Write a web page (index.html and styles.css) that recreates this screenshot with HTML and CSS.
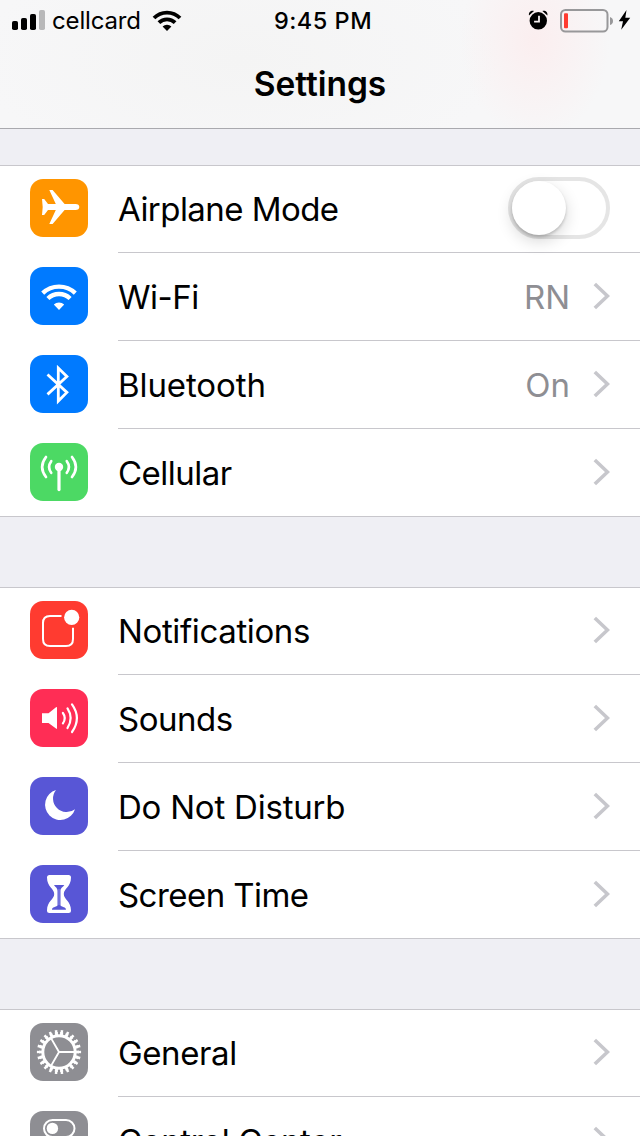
FILE: index.html
```html
<!DOCTYPE html>
<html lang="en">
<head>
<meta charset="utf-8">
<title>Settings</title>
<link rel="stylesheet" href="styles.css">
</head>
<body>
<div class="screen">
  <header class="header">
    <div class="status">
      <div class="status-left">
        <svg class="signal" width="34" height="20" viewBox="0 0 34 20"><rect x="0" y="11" width="6" height="9" rx="1.8"/><rect x="9" y="8" width="6" height="12" rx="1.8"/><rect x="18" y="4" width="6" height="16" rx="1.8"/><rect x="27" y="0" width="6" height="20" rx="1.8" fill="#b8b8b9"/></svg>
        <span class="carrier">cellcard</span>
        <svg class="status-wifi" width="30" height="22" viewBox="0 0 30 22"><g fill="none" stroke="#000" stroke-width="3.8"><path d="M2 8A18.2 18.2 0 0 1 28 8"/><path d="M6.9 12.7A11.4 11.4 0 0 1 23.1 12.7"/></g><path d="M15 21L10.6 16.6A6.3 6.3 0 0 1 19.4 16.6Z"/></svg>
      </div>
      <span class="time">9:45 PM</span>
      <div class="status-right">
        <svg width="20" height="22" viewBox="0 0 20 22"><circle cx="10.3" cy="11.8" r="8.7"/><path d="M1 6.5C.4 3.4 3 1.1 6 2ZM19.4 6.5C20 3.4 17.4 1.1 14.4 2Z"/><path d="M11 6.7V12.6H6.1" fill="none" stroke="#f8f1f2" stroke-width="1.8"/></svg>
        <svg class="battery" width="54" height="24" viewBox="0 0 54 24"><rect x="1" y="1" width="46.5" height="21.5" rx="4.5" fill="none" stroke="#98989a" stroke-width="2"/><rect x="4" y="4.3" width="4" height="15" rx="1" fill="#ff3b30"/><path d="M50 8Q53 9 53 12T50 16Z" fill="#98989a"/></svg>
        <svg class="bolt" width="13" height="22" viewBox="0 0 13 22"><path d="M8.5 1L.8 12.3H5L3.2 20.7L12.2 8.7H7.3Z"/></svg>
      </div>
    </div>
    <h1 class="title">Settings</h1>
  </header>

  <main class="groups">
    <section class="group">
      <div class="row">
        <svg class="tile orange" viewBox="0 0 58 58"><path d="M12 20H14.2L18 25L25.8 25L19.3 11H22.6L34.6 25H45.5Q49.3 25.2 49.3 28T45.5 31H34.6L22.6 45H19.3L25.8 31H18L14.2 36H12L12.7 28Z"/></svg>
        <div class="cell"><span class="label l-airplane">Airplane Mode</span><span class="switch"><span class="knob"></span></span></div>
      </div>
      <div class="row">
        <svg class="tile blue" viewBox="0 0 58 58"><g class="line" stroke-width="4.3"><path d="M12.7 26.1A23.5 23.5 0 0 1 45.3 26.1"/><path d="M17.9 31.5A16 16 0 0 1 40.1 31.5"/></g><path d="M29 43L23.8 37.5A7.7 7.7 0 0 1 34.2 37.5Z"/></svg>
        <div class="cell"><span class="label l-wifi">Wi-Fi</span><span class="value">RN</span><svg class="chevron" viewBox="0 0 17 28"><path d="M1.8 2L14.5 14L1.8 26"/></svg></div>
      </div>
      <div class="row">
        <svg class="tile blue" viewBox="0 0 58 58"><path class="line" stroke-width="2.8" d="M17.5 19.5L36.9 37.4L28.3 46V13L36.9 21.5L17.5 39.4"/></svg>
        <div class="cell"><span class="label l-bluetooth">Bluetooth</span><span class="value">On</span><svg class="chevron" viewBox="0 0 17 28"><path d="M1.8 2L14.5 14L1.8 26"/></svg></div>
      </div>
      <div class="row">
        <svg class="tile green" viewBox="0 0 58 58"><circle cx="29" cy="24" r="4.2"/><g class="line" stroke-linecap="round"><path stroke-width="3.2" d="M29 24V46.6"/><path stroke-width="2.7" d="M21.2 18.2Q17 24 21.2 29.8M36.8 18.2Q41 24 36.8 29.8M16 14Q8.3 24 16 34M42 14Q49.7 24 42 34"/></g></svg>
        <div class="cell last"><span class="label l-cellular">Cellular</span><svg class="chevron" viewBox="0 0 17 28"><path d="M1.8 2L14.5 14L1.8 26"/></svg></div>
      </div>
    </section>

    <section class="group">
      <div class="row">
        <svg class="tile red" viewBox="0 0 58 58"><path class="line" stroke-width="2" d="M31.5 15H20Q13 15 13 22V38Q13 45 20 45H36Q43 45 43 38V26.7"/><circle cx="41.7" cy="16.4" r="7.6"/></svg>
        <div class="cell"><span class="label l-notifications">Notifications</span><svg class="chevron" viewBox="0 0 17 28"><path d="M1.8 2L14.5 14L1.8 26"/></svg></div>
      </div>
      <div class="row">
        <svg class="tile pink" viewBox="0 0 58 58"><path d="M12 24.3H18.5L26 18.3Q27 17.5 27 18.7V39.2Q27 40.4 26 39.6L18.5 34H12Z"/><path class="line" stroke-width="2.2" stroke-linecap="round" d="M32.9 24Q36.6 29 32.9 34.4M37.5 19.3Q43.8 29 37.5 39M42 15.3Q51.8 29 42 43"/></svg>
        <div class="cell"><span class="label l-sounds">Sounds</span><svg class="chevron" viewBox="0 0 17 28"><path d="M1.8 2L14.5 14L1.8 26"/></svg></div>
      </div>
      <div class="row">
        <svg class="tile purple" viewBox="0 0 58 58"><path d="M26 13A15.3 15.3 0 1 0 45 32.2A13.6 13.6 0 0 1 26 13Z"/></svg>
        <div class="cell"><span class="label l-dnd">Do Not Disturb</span><svg class="chevron" viewBox="0 0 17 28"><path d="M1.8 2L14.5 14L1.8 26"/></svg></div>
      </div>
      <div class="row">
        <svg class="tile purple" viewBox="0 0 58 58"><path d="M19.5 10H38.5Q41 10 41 12.5C41 22 33.8 23.5 33.8 29S41 36 41 45.5Q41 48 38.5 48H19.5Q17 48 17 45.5C17 36 24.2 34.5 24.2 29S17 22 17 12.5Q17 10 19.5 10Z"/><path fill="#5856d6" d="M24 20H34.3C33 22.3 30.5 22.5 30.5 26V40.5C32 42 36 42 36 44.7H22C22 42 26 42 27.5 40.5V26C27.5 22.5 25.3 22.3 24 20Z"/><path d="M28.6 24H29.4V40H28.6Z" opacity=".4"/></svg>
        <div class="cell last"><span class="label l-screen">Screen Time</span><svg class="chevron" viewBox="0 0 17 28"><path d="M1.8 2L14.5 14L1.8 26"/></svg></div>
      </div>
    </section>

    <section class="group">
      <div class="row">
        <svg class="tile gray" viewBox="0 0 58 58"><g class="line"><circle cx="29" cy="29" r="16.2" stroke-width="3"/><circle cx="29" cy="29" r="18.5" stroke-width="3" pathLength="220" stroke-dasharray="5.8 4.2" stroke-dashoffset="2.9"/><circle cx="29" cy="29" r="20.5" stroke-width="3.2" pathLength="220" stroke-dasharray="4.2 5.8" stroke-dashoffset="2.1"/><path stroke-width="1.9" d="M45 29H28.5M29 29L21 15.1M29 29L21 42.9"/></g></svg>
        <div class="cell"><span class="label l-general">General</span><svg class="chevron" viewBox="0 0 17 28"><path d="M1.8 2L14.5 14L1.8 26"/></svg></div>
      </div>
      <div class="row">
        <svg class="tile gray" viewBox="0 0 58 58"><rect class="line" stroke-width="2" x="14" y="9" width="30.5" height="17" rx="8.5"/><circle cx="22.4" cy="17.4" r="5.7"/><rect x="13" y="31" width="32" height="19" rx="9.5"/><circle cx="35.5" cy="40.5" r="5.7" fill="#8e8e93"/></svg>
        <div class="cell last"><span class="label l-control">Control Center</span><svg class="chevron" viewBox="0 0 17 28"><path d="M1.8 2L14.5 14L1.8 26"/></svg></div>
      </div>
    </section>
  </main>
</div>
</body>
</html>
```

FILE: styles.css
```css
* { box-sizing: border-box; }

body {
  margin: 0;
  background: #efeff4;
  color: #000;
  font-family: Inter, "Liberation Sans", sans-serif;
}

.screen {
  width: 640px;
  height: 1136px;
  overflow: hidden;
}

.header {
  height: 129px;
  border-bottom: 1px solid #a9a9ae;
  background:
    radial-gradient(ellipse 75px 100px at 535px 40px, #fbeeef 0, #fbeeef00 100%),
    radial-gradient(ellipse 260px 120px at 240px 60px, #f4f4f4, #f4f4f400),
    #f7f7f8;
}

.status {
  display: grid;
  grid-template-columns: 1fr auto 1fr;
  grid-template-rows: 40px;
  height: 40px;
  padding: 0 9px 0 12px;
  align-items: center;
}

.status-left, .status-right { display: flex; align-items: center; }
.status-right { justify-content: flex-end; }

.carrier {
  margin: 2px 0 0 6px;
  width: 88px;
  font-size: 24px;
  line-height: 38px;
  letter-spacing: -.15px;
  white-space: nowrap;
}

.status-wifi { margin: 1px 0 0 12px; }

.time {
  font-size: 23.5px;
  font-weight: 500;
  line-height: 38px;
  letter-spacing: .5px;
  padding: 2px 0 0 3px;
}

.battery { margin: 1px 4px 0 12px; }

.title {
  margin: 22px 0 0;
  text-align: center;
  font-size: 33.5px;
  line-height: 44px;
  font-weight: 600;
  letter-spacing: -.05px;
}

.groups {
  display: flex;
  flex-direction: column;
  gap: 70px;
  padding-top: 36px;
}

.group {
  background: #fff;
  box-shadow: inset 0 1px #c8c7cc, inset 0 -1px #c8c7cc;
}

.row {
  display: flex;
  align-items: center;
  height: 88px;
  padding-left: 30px;
}

.tile {
  width: 58px;
  height: 58px;
  margin: 0 30px 2px 0;
  border-radius: 13px;
  flex: none;
  fill: #fff;
}

.line { fill: none; stroke: #fff; }

.orange { background: #ff9500; }
.blue { background: #007aff; }
.green { background: #4cd964; }
.red { background: #ff3b30; }
.pink { background: #ff2d55; }
.purple { background: #5856d6; }
.gray { background: #8e8e93; }

.cell {
  display: flex;
  align-items: center;
  flex: 1;
  height: 88px;
  padding: 0 30px 2px 0;
  border-bottom: 1px solid #c8c7cc;
}

.cell.last { border-bottom-color: transparent; }

.label {
  flex: 1;
  font-size: 33px;
  line-height: 44px;
  white-space: nowrap;
  margin-top: 2px;
}

.l-airplane { letter-spacing: -.55px; }
.l-wifi { letter-spacing: -.5px; }
.l-bluetooth { letter-spacing: -.1px; }
.l-cellular { letter-spacing: -.5px; }
.l-notifications { letter-spacing: -.37px; }
.l-sounds { letter-spacing: -.5px; }
.l-dnd { letter-spacing: -.22px; }
.l-screen { letter-spacing: -.55px; }
.l-general { letter-spacing: -.4px; }
.l-control { letter-spacing: -.35px; }

.value {
  font-size: 33px;
  line-height: 44px;
  color: #8e8e93;
  margin: 2px 23px 0 0;
}

.chevron {
  width: 17px;
  height: 28px;
  fill: none;
  stroke: #c7c7cc;
  stroke-width: 3.6px;
}

.switch {
  display: flex;
  width: 102px;
  height: 62px;
  border: 4px solid #e5e5e5;
  border-radius: 31px;
}

.knob {
  width: 54px;
  height: 54px;
  border-radius: 50%;
  background: #fff;
  box-shadow: 0 6px 16px rgba(0, 0, 0, .16), 0 2px 3px rgba(0, 0, 0, .18);
}
```
